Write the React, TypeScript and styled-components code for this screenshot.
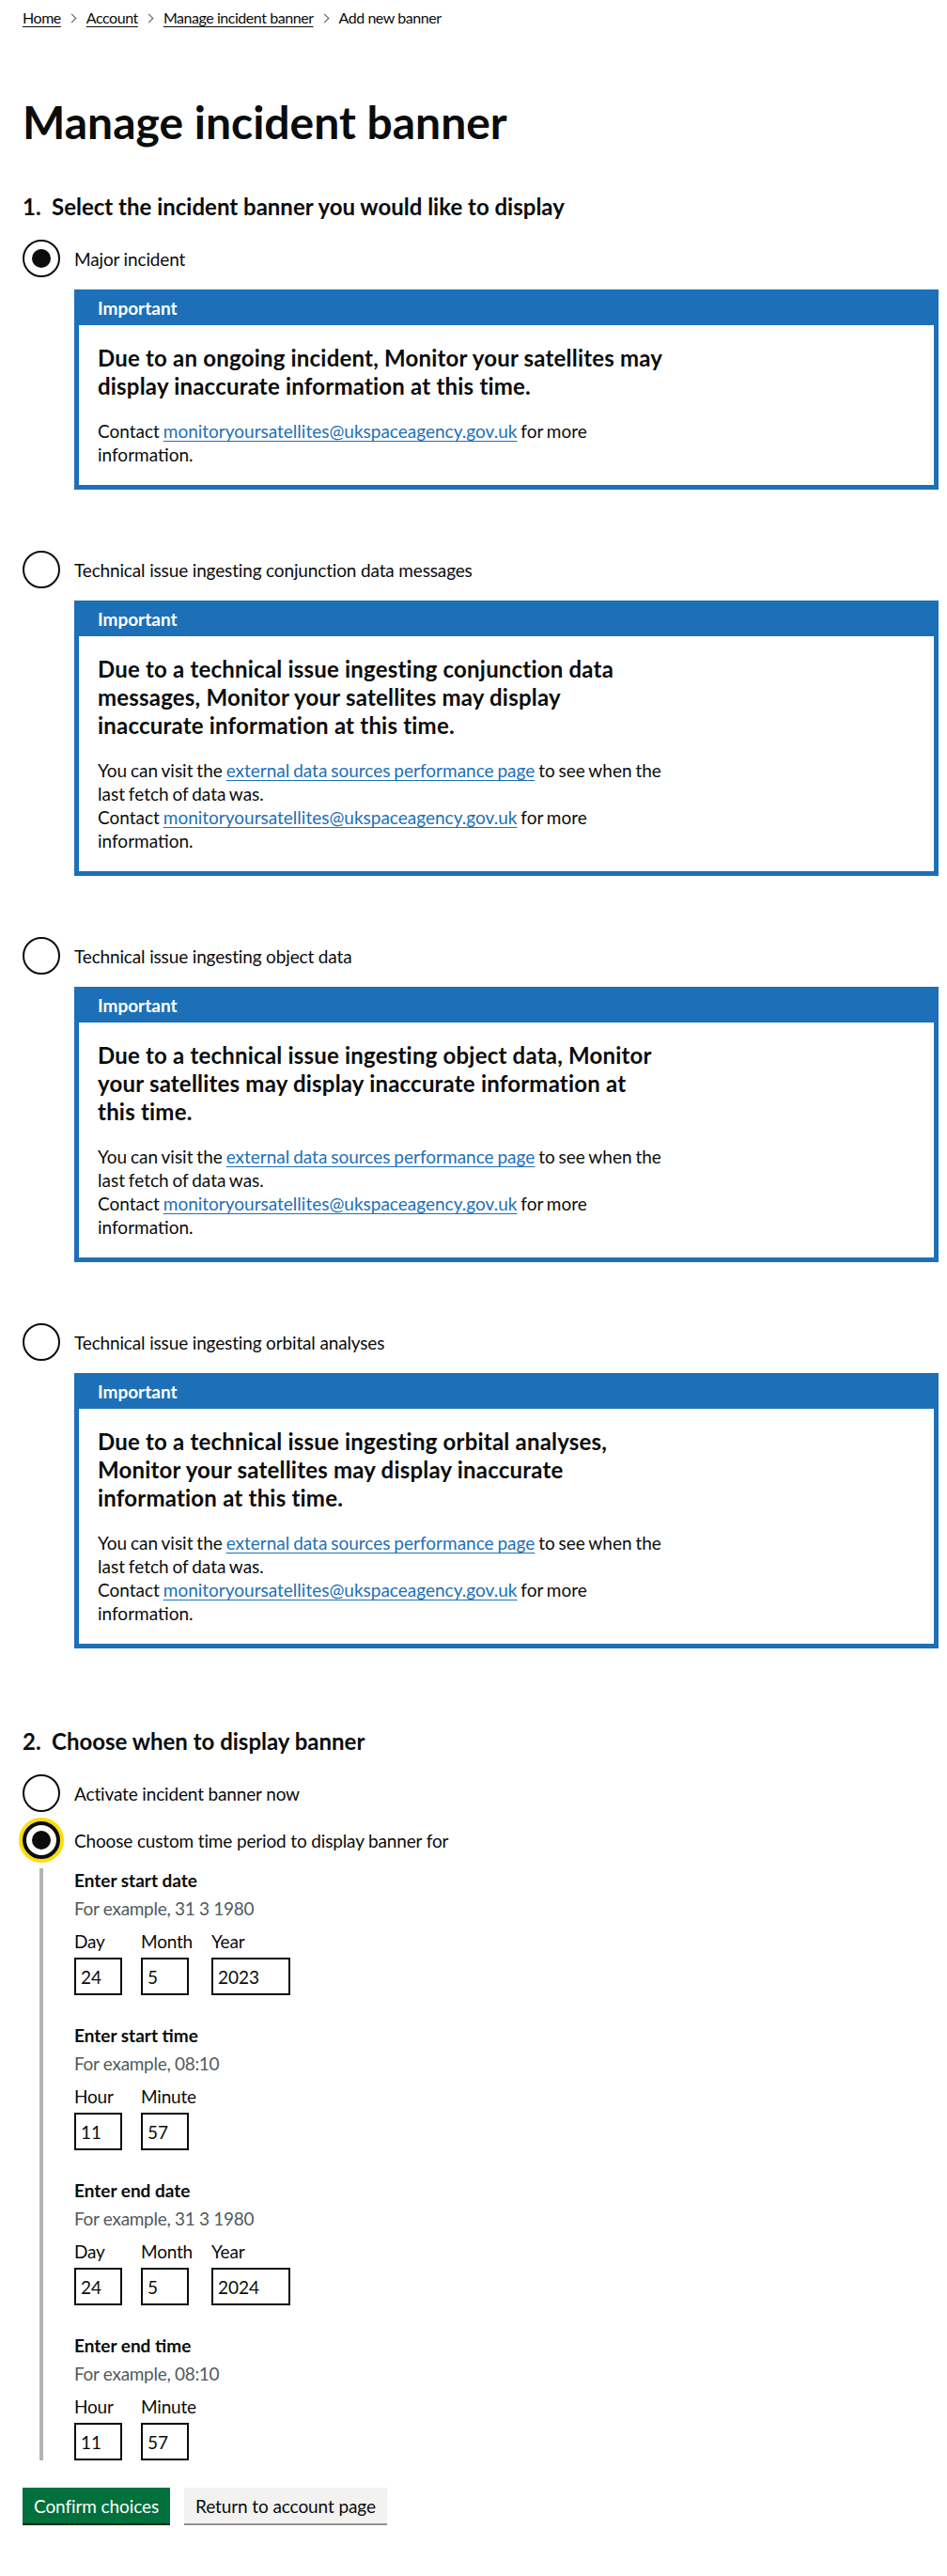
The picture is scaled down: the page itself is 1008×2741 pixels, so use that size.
import React from "react";
import styled, { createGlobalStyle } from "styled-components";

const GlobalStyle = createGlobalStyle`
  html, body {
    margin: 0;
    padding: 0;
    background: #ffffff;
  }
  body {
    font-family: Lato, "Liberation Sans", Arial, sans-serif;
    color: #0b0c0c;
    -webkit-font-smoothing: antialiased;
  }
  * {
    box-sizing: border-box;
  }
`;

const Page = styled.div`
  width: 960px;
  margin: 0 auto;
  padding-bottom: 55px;
`;

const Breadcrumbs = styled.nav`
  padding-top: 9px;
`;

const Crumbs = styled.ol`
  list-style: none;
  margin: 0;
  padding: 0;
  display: flex;
  align-items: center;
  font-size: 16px;
  line-height: 20px;
  letter-spacing: -0.45px;
`;

const Crumb = styled.li`
  display: flex;
  align-items: center;
`;

const Chevron = styled.span`
  display: inline-block;
  width: 7px;
  height: 7px;
  border: solid #505a5f;
  border-width: 1px 1px 0 0;
  transform: rotate(45deg);
  margin: 0 12px 0 8px;
`;

const CrumbLink = styled.a`
  color: #0b0c0c;
  text-decoration: underline;
  text-decoration-thickness: 1px;
  text-underline-offset: 0.16em;
`;

const Title = styled.h1`
  margin: 76px 0 50px;
  font-size: 48px;
  line-height: 50px;
  font-weight: 700;
`;

const Fieldset = styled.fieldset<{ $gap?: number }>`
  margin: 0 0 ${(p) => p.$gap ?? 0}px;
  padding: 0;
  border: 0;
  min-width: 0;
`;

const Legend = styled.legend`
  display: flex;
  padding: 0;
  margin: 0 0 20px;
  font-size: 24px;
  line-height: 30px;
  font-weight: 700;
`;

const StepNumber = styled.span`
  width: 31px;
  flex: none;
`;

const Option = styled.div`
  & + & {
    margin-top: 65px;
  }
`;

const RadioItem = styled.div`
  display: flex;
  align-items: flex-start;
  min-height: 40px;
  & + & {
    margin-top: 10px;
  }
`;

const RadioMark = styled.span<{ $checked?: boolean; $focused?: boolean }>`
  flex: none;
  width: 40px;
  height: 40px;
  border-radius: 50%;
  border: ${(p) => (p.$focused ? 4 : 2)}px solid #0b0c0c;
  box-shadow: ${(p) => (p.$focused ? "0 0 0 4px #ffdd00" : "none")};
  display: flex;
  align-items: center;
  justify-content: center;
  &::after {
    content: "";
    width: 20px;
    height: 20px;
    border-radius: 50%;
    background: #0b0c0c;
    display: ${(p) => (p.$checked ? "block" : "none")};
  }
`;

const RadioLabel = styled.label`
  padding: 8px 15px 5px;
  font-size: 19px;
  line-height: 25px;
  letter-spacing: -0.15px;
`;

const Banner = styled.div`
  margin: 13px -15px 0 55px;
  border: 5px solid #1d70b8;
  background: #1d70b8;
`;

const BannerHeader = styled.div`
  padding: 2px 20px 5px;
  border-bottom: 1px solid transparent;
`;

const BannerTitle = styled.h2`
  margin: 0;
  font-size: 19px;
  line-height: 25px;
  font-weight: 700;
  color: #ffffff;
`;

const BannerContent = styled.div`
  background: #ffffff;
  padding: 20px;
`;

const BannerHeading = styled.h3`
  margin: 0 0 20px;
  max-width: 660px;
  font-size: 24px;
  line-height: 30px;
  font-weight: 700;
  letter-spacing: 0.2px;
`;

const BannerText = styled.p`
  margin: 0;
  max-width: 605px;
  font-size: 19px;
  line-height: 25px;
  word-spacing: -1px;
`;

const Link = styled.a`
  color: #1d70b8;
  text-decoration: underline;
  text-decoration-thickness: 1px;
  text-underline-offset: 0.16em;
`;

const Conditional = styled.div`
  margin: 10px 0 0 18px;
  padding-left: 33px;
  border-left: 4px solid #b1b4b6;
`;

const Group = styled.div`
  & + & {
    margin-top: 30px;
  }
`;

const GroupLegend = styled.div`
  margin-bottom: 5px;
  font-size: 19px;
  line-height: 25px;
  font-weight: 700;
`;

const Hint = styled.div`
  margin-bottom: 10px;
  font-size: 19px;
  line-height: 25px;
  letter-spacing: -0.3px;
  color: #505a5f;
`;

const InputRow = styled.div`
  display: flex;
  gap: 20px;
`;

const InputItem = styled.div`
  display: flex;
  flex-direction: column;
`;

const InputLabel = styled.label`
  margin-bottom: 5px;
  font-size: 19px;
  line-height: 25px;
  letter-spacing: -0.2px;
`;

const TextInput = styled.input<{ $width: number }>`
  width: ${(p) => p.$width}px;
  height: 40px;
  padding: 5px;
  border: 2px solid #0b0c0c;
  border-radius: 0;
  font-family: inherit;
  font-size: 19px;
  line-height: 25px;
  color: #0b0c0c;
  background: #ffffff;
`;

const ButtonGroup = styled.div`
  display: flex;
  gap: 15px;
  margin-top: 29px;
`;

const Button = styled.button<{ $secondary?: boolean }>`
  padding: 8px 10px 7px;
  border: 2px solid transparent;
  border-radius: 0;
  font-family: inherit;
  font-size: 19px;
  line-height: 19px;
  font-weight: 400;
  letter-spacing: -0.1px;
  cursor: pointer;
  color: ${(p) => (p.$secondary ? "#0b0c0c" : "#ffffff")};
  background: ${(p) => (p.$secondary ? "#f3f2f1" : "#00703c")};
  box-shadow: 0 2px 0 ${(p) => (p.$secondary ? "#929191" : "#002d18")};
`;

const EMAIL = "monitoryoursatellites@ukspaceagency.gov.uk";

type Incident = {
  label: string;
  heading: string[];
  showSources: boolean;
  checked?: boolean;
};

const incidents: Incident[] = [
  {
    label: "Major incident",
    heading: [
      "Due to an ongoing incident, Monitor your satellites may",
      "display inaccurate information at this time.",
    ],
    showSources: false,
    checked: true,
  },
  {
    label: "Technical issue ingesting conjunction data messages",
    heading: [
      "Due to a technical issue ingesting conjunction data",
      "messages, Monitor your satellites may display",
      "inaccurate information at this time.",
    ],
    showSources: true,
  },
  {
    label: "Technical issue ingesting object data",
    heading: [
      "Due to a technical issue ingesting object data, Monitor",
      "your satellites may display inaccurate information at",
      "this time.",
    ],
    showSources: true,
  },
  {
    label: "Technical issue ingesting orbital analyses",
    heading: [
      "Due to a technical issue ingesting orbital analyses,",
      "Monitor your satellites may display inaccurate",
      "information at this time.",
    ],
    showSources: true,
  },
];

type Field = { label: string; value: string; width: number };

const dateFields = (year: string): Field[] => [
  { label: "Day", value: "24", width: 51 },
  { label: "Month", value: "5", width: 51 },
  { label: "Year", value: year, width: 84 },
];

const timeFields: Field[] = [
  { label: "Hour", value: "11", width: 51 },
  { label: "Minute", value: "57", width: 51 },
];

const groups = [
  { title: "Enter start date", hint: "For example, 31 3 1980", fields: dateFields("2023") },
  { title: "Enter start time", hint: "For example, 08:10", fields: timeFields },
  { title: "Enter end date", hint: "For example, 31 3 1980", fields: dateFields("2024") },
  { title: "Enter end time", hint: "For example, 08:10", fields: timeFields },
];

export default function App() {
  return (
    <>
      <GlobalStyle />
      <Page>
        <Breadcrumbs>
          <Crumbs>
            <Crumb>
              <CrumbLink href="#">Home</CrumbLink>
            </Crumb>
            <Crumb>
              <Chevron />
              <CrumbLink href="#">Account</CrumbLink>
            </Crumb>
            <Crumb>
              <Chevron />
              <CrumbLink href="#">Manage incident banner</CrumbLink>
            </Crumb>
            <Crumb>
              <Chevron />
              Add new banner
            </Crumb>
          </Crumbs>
        </Breadcrumbs>

        <Title>Manage incident banner</Title>

        <Fieldset $gap={84}>
          <Legend>
            <StepNumber>1.</StepNumber>
            Select the incident banner you would like to display
          </Legend>
          {incidents.map((incident) => (
            <Option key={incident.label}>
              <RadioItem>
                <RadioMark $checked={incident.checked} />
                <RadioLabel>{incident.label}</RadioLabel>
              </RadioItem>
              <Banner>
                <BannerHeader>
                  <BannerTitle>Important</BannerTitle>
                </BannerHeader>
                <BannerContent>
                  <BannerHeading>
                    {incident.heading.map((line, i) => (
                      <React.Fragment key={line}>
                        {i > 0 && <br />}
                        {line}
                      </React.Fragment>
                    ))}
                  </BannerHeading>
                  {incident.showSources && (
                    <BannerText>
                      You can visit the <Link href="#">external data sources performance page</Link> to
                      see when the last fetch of data was.
                    </BannerText>
                  )}
                  <BannerText>
                    Contact <Link href="#">{EMAIL}</Link> for more information.
                  </BannerText>
                </BannerContent>
              </Banner>
            </Option>
          ))}
        </Fieldset>

        <Fieldset>
          <Legend>
            <StepNumber>2.</StepNumber>
            Choose when to display banner
          </Legend>
          <RadioItem>
            <RadioMark />
            <RadioLabel>Activate incident banner now</RadioLabel>
          </RadioItem>
          <RadioItem>
            <RadioMark $checked $focused />
            <RadioLabel>Choose custom time period to display banner for</RadioLabel>
          </RadioItem>
          <Conditional>
            {groups.map((group) => (
              <Group key={group.title}>
                <GroupLegend>{group.title}</GroupLegend>
                <Hint>{group.hint}</Hint>
                <InputRow>
                  {group.fields.map((field) => (
                    <InputItem key={field.label}>
                      <InputLabel>{field.label}</InputLabel>
                      <TextInput $width={field.width} defaultValue={field.value} readOnly />
                    </InputItem>
                  ))}
                </InputRow>
              </Group>
            ))}
          </Conditional>
        </Fieldset>

        <ButtonGroup>
          <Button>Confirm choices</Button>
          <Button $secondary>Return to account page</Button>
        </ButtonGroup>
      </Page>
    </>
  );
}
